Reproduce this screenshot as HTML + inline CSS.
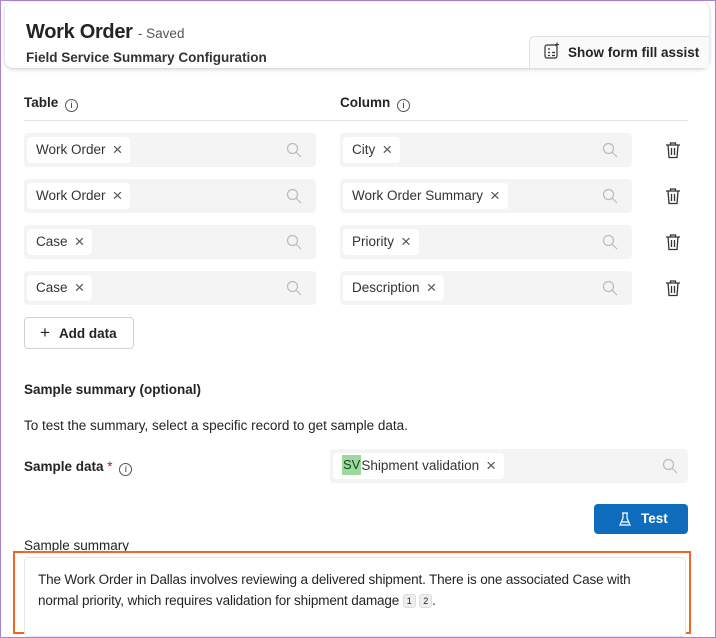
<!DOCTYPE html>
<html><head><style>
*{box-sizing:border-box;margin:0;padding:0}
body{width:716px;height:638px;overflow:hidden;background:#fff;font-family:"Liberation Sans",sans-serif;color:#242424;position:relative}
.frame{position:absolute;left:0;top:0;width:716px;height:638px;border:1px solid #a287cf}
.abs{position:absolute}
.hdr{left:5px;top:2px;width:704px;height:66px;border-radius:8px;box-shadow:0 1px 4px rgba(0,0,0,.22);background:#fff}
.inp{position:absolute;height:34px;background:#f4f4f4;border-radius:4px}
.chip{position:absolute;left:3px;top:4px;height:26px;background:#fff;border-radius:4px;font-size:13.5px;line-height:26px;padding:0 8px 0 9px;color:#333;white-space:nowrap}
.chip .x{margin-left:7px;font-size:17px;color:#555;font-weight:normal;vertical-align:-1px}
.srch{position:absolute;right:14px;top:9px}
.trash{position:absolute;left:665px}
.lbl{font-size:13.5px;font-weight:bold}
.i{display:inline-block;width:13px;height:13px;border:1px solid #555;border-radius:50%;font-size:9px;line-height:11px;text-align:center;font-weight:normal;vertical-align:-1px;margin-left:3px}
</style></head><body>
<div class="frame"></div>
<div class="abs hdr"></div>
<div class="abs" style="left:26px;top:21px;font-size:20px;font-weight:bold;letter-spacing:-0.3px">Work Order <span style="font-size:13.5px;font-weight:normal;color:#555;letter-spacing:0">- Saved</span></div>
<div class="abs lbl" style="left:26px;top:50px;color:#333">Field Service Summary Configuration</div>
<div class="abs" style="left:529px;top:36px;width:180px;height:32px;background:#fafafa;border:1px solid #e0e0e0;border-right:none;border-bottom:none;border-radius:6px 0 0 0"></div>
<svg class="abs" style="left:543px;top:42px" width="18" height="18" viewBox="0 0 18 18" fill="none" stroke="#333" stroke-width="1.2"><rect x="2" y="3" width="12" height="13" rx="2"/><path d="M5 7h2M5 10.5h2M5 13.5h2M9 10.5h3M9 13.5h3"/><path d="M14 0.5v4M12 2.5h4" stroke-width="1.1"/></svg>
<div class="abs lbl" style="left:568px;top:45px">Show form fill assist</div>

<div class="abs lbl" style="left:24px;top:95px">Table <span class="i">i</span></div>
<div class="abs lbl" style="left:340px;top:95px">Column <span class="i">i</span></div>
<div class="abs" style="left:24px;top:120px;width:664px;height:1px;background:#e2e2e2"></div>

<div class="inp" style="left:24px;top:133px;width:292px"><div class="chip">Work Order<span class="x">×</span></div><svg class="srch" width="16" height="16" viewBox="0 0 16 16" fill="none" stroke="#bbb" stroke-width="1.2"><circle cx="6.5" cy="6.5" r="5"/><path d="M10 10l5 5"/></svg></div>
<div class="inp" style="left:340px;top:133px;width:292px"><div class="chip">City<span class="x">×</span></div><svg class="srch" width="16" height="16" viewBox="0 0 16 16" fill="none" stroke="#bbb" stroke-width="1.2"><circle cx="6.5" cy="6.5" r="5"/><path d="M10 10l5 5"/></svg></div>
<div class="inp" style="left:24px;top:179px;width:292px"><div class="chip">Work Order<span class="x">×</span></div><svg class="srch" width="16" height="16" viewBox="0 0 16 16" fill="none" stroke="#bbb" stroke-width="1.2"><circle cx="6.5" cy="6.5" r="5"/><path d="M10 10l5 5"/></svg></div>
<div class="inp" style="left:340px;top:179px;width:292px"><div class="chip">Work Order Summary<span class="x">×</span></div><svg class="srch" width="16" height="16" viewBox="0 0 16 16" fill="none" stroke="#bbb" stroke-width="1.2"><circle cx="6.5" cy="6.5" r="5"/><path d="M10 10l5 5"/></svg></div>
<div class="inp" style="left:24px;top:225px;width:292px"><div class="chip">Case<span class="x">×</span></div><svg class="srch" width="16" height="16" viewBox="0 0 16 16" fill="none" stroke="#bbb" stroke-width="1.2"><circle cx="6.5" cy="6.5" r="5"/><path d="M10 10l5 5"/></svg></div>
<div class="inp" style="left:340px;top:225px;width:292px"><div class="chip">Priority<span class="x">×</span></div><svg class="srch" width="16" height="16" viewBox="0 0 16 16" fill="none" stroke="#bbb" stroke-width="1.2"><circle cx="6.5" cy="6.5" r="5"/><path d="M10 10l5 5"/></svg></div>
<div class="inp" style="left:24px;top:271px;width:292px"><div class="chip">Case<span class="x">×</span></div><svg class="srch" width="16" height="16" viewBox="0 0 16 16" fill="none" stroke="#bbb" stroke-width="1.2"><circle cx="6.5" cy="6.5" r="5"/><path d="M10 10l5 5"/></svg></div>
<div class="inp" style="left:340px;top:271px;width:292px"><div class="chip">Description<span class="x">×</span></div><svg class="srch" width="16" height="16" viewBox="0 0 16 16" fill="none" stroke="#bbb" stroke-width="1.2"><circle cx="6.5" cy="6.5" r="5"/><path d="M10 10l5 5"/></svg></div>

<svg class="trash" style="top:141px" width="16" height="18" viewBox="0 0 16 18" fill="none" stroke="#333" stroke-width="1.3"><path d="M1 4h14M5.5 4V2h5v2M3 4l1 12.5h8L13 4M6.5 7v7M9.5 7v7"/></svg>
<svg class="trash" style="top:187px" width="16" height="18" viewBox="0 0 16 18" fill="none" stroke="#333" stroke-width="1.3"><path d="M1 4h14M5.5 4V2h5v2M3 4l1 12.5h8L13 4M6.5 7v7M9.5 7v7"/></svg>
<svg class="trash" style="top:233px" width="16" height="18" viewBox="0 0 16 18" fill="none" stroke="#333" stroke-width="1.3"><path d="M1 4h14M5.5 4V2h5v2M3 4l1 12.5h8L13 4M6.5 7v7M9.5 7v7"/></svg>
<svg class="trash" style="top:279px" width="16" height="18" viewBox="0 0 16 18" fill="none" stroke="#333" stroke-width="1.3"><path d="M1 4h14M5.5 4V2h5v2M3 4l1 12.5h8L13 4M6.5 7v7M9.5 7v7"/></svg>

<div class="abs" style="left:24px;top:317px;width:110px;height:32px;border:1px solid #d1d1d1;border-radius:4px;font-size:13.5px;font-weight:bold;line-height:30px;padding-left:15px"><span style="font-weight:normal;font-size:17px;margin-right:9px">+</span>Add data</div>

<div class="abs lbl" style="left:24px;top:382px">Sample summary (optional)</div>
<div class="abs" style="left:24px;top:418px;font-size:13.5px">To test the summary, select a specific record to get sample data.</div>
<div class="abs lbl" style="left:24px;top:459px">Sample data <span style="color:#c50f1f;font-weight:normal">*</span> <span class="i">i</span></div>
<div class="inp" style="left:330px;top:449px;width:358px"><div class="chip" style="padding-left:11px"><span style="display:inline-block;background:#9fd89f;height:20px;line-height:20px;font-size:13px;margin-left:-2px;padding:0 1px;color:#0e4d1a;vertical-align:1px">SV</span>Shipment validation<span class="x">×</span></div><svg class="srch" style="right:10px" width="16" height="16" viewBox="0 0 16 16" fill="none" stroke="#bbb" stroke-width="1.2"><circle cx="6.5" cy="6.5" r="5"/><path d="M10 10l5 5"/></svg></div>

<div class="abs" style="left:594px;top:504px;width:94px;height:30px;background:#0f6cbd;border-radius:4px;color:#fff;font-size:13.5px;font-weight:bold;line-height:30px"><svg style="position:absolute;left:25px;top:8px" width="12" height="14" viewBox="0 0 12 14" fill="none" stroke="#fff" stroke-width="1.2"><path d="M3 1h6M4 1v5L1 13h10L8 6V1M2.5 10h7"/></svg><span style="position:absolute;left:47px">Test</span></div>

<div class="abs" style="left:24px;top:538px;font-size:13.5px">Sample summary</div>
<div class="abs" style="left:13px;top:551px;width:678px;height:83px;border:2px solid #f26522;background:#fff"></div>
<div class="abs" style="left:24px;top:557px;width:662px;height:80px;border:1px solid #e6e6e6;border-radius:4px;background:#fff"></div>
<div class="abs" style="left:38px;top:569px;width:628px;font-size:13.5px;line-height:21px;letter-spacing:-0.15px">The Work Order in Dallas involves reviewing a delivered shipment. There is one associated Case with normal priority, which requires validation for shipment damage <span style="display:inline-block;background:#eee;border:1px solid #ddd;border-radius:3px;font-size:9px;line-height:12px;padding:0 3px;vertical-align:1px">1</span> <span style="display:inline-block;background:#eee;border:1px solid #ddd;border-radius:3px;font-size:9px;line-height:12px;padding:0 3px;vertical-align:1px">2</span>.</div>
</body></html>
